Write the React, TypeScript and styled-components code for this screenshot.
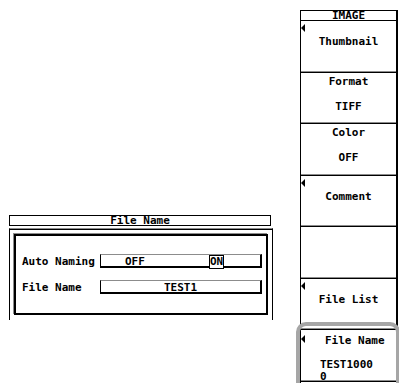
import React from "react";
import styled, { createGlobalStyle } from "styled-components";

const GlobalStyle = createGlobalStyle`
  html, body {
    margin: 0;
    padding: 0;
    background: #ffffff;
  }
  body {
    width: 399px;
    height: 383px;
    overflow: hidden;
    font-family: "DejaVu Sans Mono", "Liberation Mono", monospace;
    font-size: 11px;
    font-weight: bold;
    color: #000000;
  }
`;

const Screen = styled.div`
  display: flex;
  width: 399px;
  height: 383px;
`;

const Workspace = styled.div`
  width: 300px;
  padding: 215px 0 0 9px;
  box-sizing: border-box;
`;

const Dialog = styled.div`
  width: 264px;
`;

const DialogTitle = styled.div`
  width: 262px;
  height: 11px;
  box-sizing: border-box;
  border: 1px solid #000;
  line-height: 10px;
  text-align: center;
  white-space: pre;
`;

const Panel = styled.div`
  margin-top: 2px;
  height: 92px;
  box-sizing: border-box;
  padding: 5px 4px;
  border-top: 1px solid #8c8c8c;
  border-left: 1px solid #000;
  border-right: 1px solid #000;
  box-shadow: inset 0 1px 0 #000;
`;

const InnerBox = styled.div`
  height: 81px;
  box-sizing: border-box;
  border: 2px solid #000;
  box-shadow: -1px -1px 0 #8c8c8c;
  padding: 18px 0 0 6px;
  display: flex;
  flex-direction: column;
  gap: 12px;
`;

const Row = styled.div`
  display: grid;
  grid-template-columns: 78px 162px;
  height: 14px;
`;

const Label = styled.div`
  align-self: end;
  line-height: 13px;
  white-space: pre;
`;

const Field = styled.div`
  display: flex;
  align-items: flex-start;
  height: 14px;
  box-sizing: border-box;
  border-top: 1px solid #8c8c8c;
  border-left: 1px solid #000;
  border-right: 2px solid #000;
  border-bottom: 2px solid #000;
  line-height: 13px;
`;

const Option = styled.div<{ $selected?: boolean; $width?: number }>`
  white-space: pre;
  ${(p) => (p.$width ? `width: ${p.$width}px; padding-left: 24px; box-sizing: border-box;` : "")}
  ${(p) =>
    p.$selected
      ? `
    height: 14px;
    box-sizing: border-box;
    border: 1px solid #000;
    line-height: 12px;
    background: #fff;
  `
      : ""}
`;

const FieldValue = styled.div`
  flex: 1;
  text-align: center;
`;

const Menu = styled.div`
  width: 98px;
  height: 373px;
  margin-top: 10px;
  box-sizing: border-box;
  border-left: 1px solid #000;
  border-right: 2px solid #000;
  display: flex;
  flex-direction: column;
`;

const MenuTitle = styled.div`
  height: 11px;
  flex: none;
  box-sizing: border-box;
  border-top: 1px solid #000;
  border-bottom: 1px solid #000;
  line-height: 10px;
  text-align: center;
`;

const Key = styled.div<{ $active?: boolean }>`
  position: relative;
  flex: none;
  height: 51.5px;
  box-sizing: border-box;
  padding-top: ${(p) => (p.$active ? 5 : 3)}px;
  border-bottom: 1px solid #000;
  box-shadow: inset 0 -1px 0 #8c8c8c;
  display: flex;
  flex-direction: column;
  align-items: center;

  ${(p) =>
    p.$active
      ? `
    align-items: stretch;
    &::after {
      content: "";
      position: absolute;
      top: -8px;
      left: -5px;
      right: -4px;
      bottom: -12px;
      border: 4px solid #a6a6a6;
      border-radius: 10px;
      pointer-events: none;
    }
  `
      : ""}
`;

const Arrow = styled.div`
  align-self: flex-start;
  width: 0;
  height: 0;
  border-top: 4px solid transparent;
  border-bottom: 4px solid transparent;
  border-right: 4px solid #000;
`;

const KeyText = styled.div<{ $gap?: number }>`
  line-height: 11px;
  margin-top: ${(p) => p.$gap ?? 0}px;
  white-space: pre;
`;

const ActiveHead = styled.div`
  display: flex;
  align-items: center;
  line-height: 11px;
  gap: 20px;
`;

const ActiveValue = styled.div`
  margin: 13px 0 0 19px;
  width: 8ch;
  line-height: 12px;
  word-break: break-all;
`;

type SoftKey =
  | { kind: "menu"; label: string }
  | { kind: "value"; label: string; value: string }
  | { kind: "blank" };

const keys: SoftKey[] = [
  { kind: "menu", label: "Thumbnail" },
  { kind: "value", label: "Format", value: "TIFF" },
  { kind: "value", label: "Color", value: "OFF" },
  { kind: "menu", label: "Comment" },
  { kind: "blank" },
  { kind: "menu", label: "File List" },
];

export default function App() {
  return (
    <>
      <GlobalStyle />
      <Screen>
        <Workspace>
          <Dialog>
            <DialogTitle>File Name</DialogTitle>
            <Panel>
              <InnerBox>
                <Row>
                  <Label>Auto Naming</Label>
                  <Field>
                    <Option $width={108}>OFF</Option>
                    <Option $selected>ON</Option>
                  </Field>
                </Row>
                <Row>
                  <Label>File Name</Label>
                  <Field>
                    <FieldValue>TEST1</FieldValue>
                  </Field>
                </Row>
              </InnerBox>
            </Panel>
          </Dialog>
        </Workspace>

        <Menu>
          <MenuTitle>IMAGE</MenuTitle>
          {keys.map((k, i) => (
            <Key key={i}>
              {k.kind === "menu" && (
                <>
                  <Arrow />
                  <KeyText $gap={4}>{k.label}</KeyText>
                </>
              )}
              {k.kind === "value" && (
                <>
                  <KeyText>{k.label}</KeyText>
                  <KeyText $gap={14}>{k.value}</KeyText>
                </>
              )}
            </Key>
          ))}
          <Key $active>
            <ActiveHead>
              <Arrow />
              <span>File Name</span>
            </ActiveHead>
            <ActiveValue>TEST10000</ActiveValue>
          </Key>
        </Menu>
      </Screen>
    </>
  );
}
